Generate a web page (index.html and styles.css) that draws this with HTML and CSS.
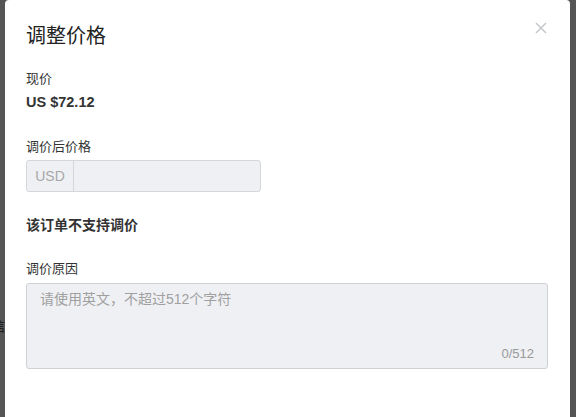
FILE: index.html
```html
<!DOCTYPE html>
<html lang="zh">
<head>
<meta charset="utf-8">
<link rel="stylesheet" href="styles.css">
</head>
<body>
<div class="overlay">
  <span class="peek">信</span>
  <div class="modal">
    <button class="close" aria-label="close">
      <svg width="12" height="12" viewBox="0 0 12 12"><path d="M1 1L11 11M11 1L1 11" stroke="#c4c8cc" stroke-width="1.5" fill="none"/></svg>
    </button>
    <h1 class="title">调整价格</h1>
    <div class="label l-current">现价</div>
    <div class="price">US $72.12</div>
    <div class="label l-after">调价后价格</div>
    <div class="input-group">
      <span class="addon">USD</span>
      <span class="input"></span>
    </div>
    <div class="notice">该订单不支持调价</div>
    <div class="label l-reason">调价原因</div>
    <div class="textarea">
      <span class="placeholder">请使用英文，不超过512个字符</span>
      <span class="counter">0/512</span>
    </div>
  </div>
</div>
</body>
</html>
```
FILE: styles.css
```css
html, body {
  margin: 0;
  padding: 0;
  height: 100%;
  overflow: hidden;
}
body {
  background: #555555;
  font-family: "Liberation Sans", Arial, "Noto Sans CJK SC", sans-serif;
  color: #333333;
}
.overlay {
  height: 100%;
  padding: 0 6px 0 5px;
  position: relative;
  overflow: hidden;
}
.peek {
  position: absolute;
  left: -8px;
  top: 317px;
  font-size: 13px;
  line-height: 18px;
  color: #111;
  font-family: "Noto Sans CJK SC", sans-serif;
}
.modal {
  position: relative;
  background: #ffffff;
  border-radius: 4px 4px 0 0;
  height: 100%;
  padding: 21px 22px 0 21px;
  box-sizing: border-box;
}
.close {
  position: absolute;
  right: 23px;
  top: 22px;
  border: 0;
  background: none;
  padding: 0;
  width: 12px;
  height: 12px;
  display: flex;
}
.title {
  margin: 0;
  font-size: 20px;
  font-weight: normal;
  line-height: 28px;
  color: #222;
  font-family: "Noto Sans CJK SC", sans-serif;
}
.label {
  font-size: 13px;
  line-height: 18px;
  color: #333;
  font-family: "Noto Sans CJK SC", sans-serif;
}
.l-current { margin-top: 20px; }
.price {
  margin-top: 6px;
  font-size: 14.5px;
  line-height: 18px;
  font-weight: bold;
  color: #333;
}
.l-after { margin-top: 26px; }
.input-group {
  margin-top: 5px;
  width: 235px;
  height: 32px;
  box-sizing: border-box;
  border: 1px solid #d4d6da;
  border-radius: 3px;
  background: #eff0f4;
  display: flex;
}
.addon {
  width: 47px;
  box-sizing: border-box;
  border-right: 1px solid #d4d6da;
  color: #a8a8a8;
  font-size: 14px;
  display: flex;
  align-items: center;
  justify-content: center;
}
.input { flex: 1; }
.notice {
  margin-top: 23px;
  font-size: 14px;
  line-height: 18px;
  font-weight: bold;
  color: #333;
  font-family: "Noto Sans CJK SC", sans-serif;
}
.l-reason { margin-top: 26px; }
.textarea {
  margin-top: 6px;
  height: 86px;
  box-sizing: border-box;
  border: 1px solid #cfd1d5;
  border-radius: 3px;
  background: #eff0f4;
  position: relative;
  padding: 5px 13px;
}
.placeholder {
  font-size: 14px;
  line-height: 20px;
  color: #a0a0a0;
  font-family: "Liberation Sans", Arial, "Noto Sans CJK SC", sans-serif;
}
.counter {
  position: absolute;
  right: 13px;
  bottom: 6px;
  font-size: 13px;
  line-height: 16px;
  color: #999;
}
```
